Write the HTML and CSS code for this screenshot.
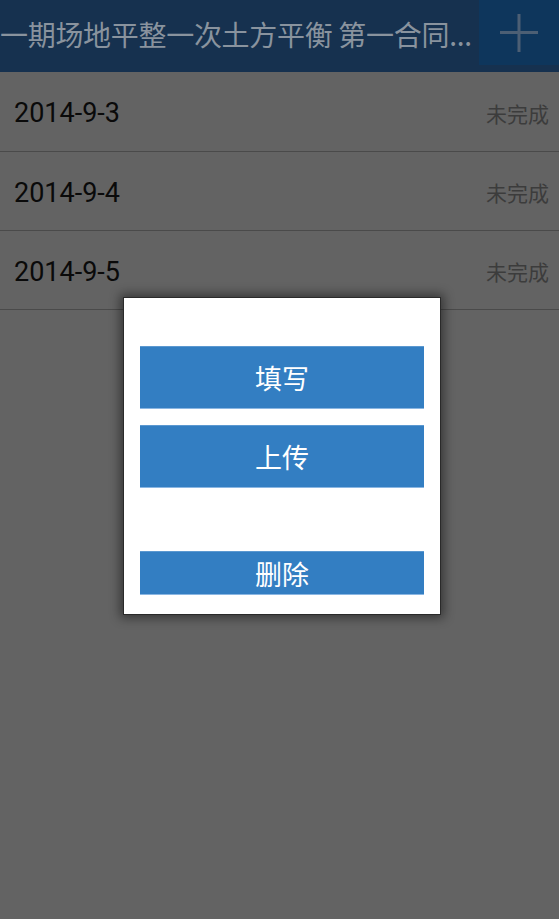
FILE: index.html
```html
<!DOCTYPE html>
<html lang="zh-CN">
<head>
<meta charset="utf-8">
<title>列表</title>
<link rel="stylesheet" href="styles.css">
</head>
<body>
<div class="app">
  <header class="topbar">
    <div class="title">一期场地平整一次土方平衡 第一合同...</div>
    <div class="add-btn">
      <svg width="40" height="38" viewBox="0 0 40 38"><path d="M20 0V38M1 18.5H39" stroke="#4c5f74" stroke-width="3" fill="none"/></svg>
    </div>
  </header>
  <ul class="list">
    <li class="row"><span class="date">2014-9-3</span><span class="status">未完成</span></li>
    <li class="row"><span class="date">2014-9-4</span><span class="status">未完成</span></li>
    <li class="row"><span class="date">2014-9-5</span><span class="status">未完成</span></li>
  </ul>
</div>
<div class="dialog">
  <div class="dbtn big">填写</div>
  <div class="dbtn big">上传</div>
  <div class="spacer"></div>
  <div class="dbtn small">删除</div>
</div>
</body>
</html>
```
FILE: styles.css
```css
html, body {
  margin: 0;
  padding: 0;
  width: 559px;
  height: 919px;
  background: #636363;
  overflow: hidden;
  font-family: Roboto, "Noto Sans CJK SC", sans-serif;
}
.app {
  width: 559px;
}
.topbar {
  height: 72px;
  background: #16314f;
  display: flex;
  align-items: flex-start;
  justify-content: space-between;
}
.title {
  font-family: "Noto Sans CJK SC", sans-serif;
  font-size: 28px;
  color: #89939e;
  line-height: 68px;
  white-space: nowrap;
  overflow: hidden;
  letter-spacing: -0.3px;
}
.add-btn {
  width: 80px;
  height: 65px;
  background: #0e365c;
  display: flex;
  align-items: center;
  justify-content: center;
  flex-shrink: 0;
}
.list {
  list-style: none;
  margin: 0;
  padding: 0;
}
.row {
  height: 78px;
  border-bottom: 1px solid #4a4a4a;
  display: flex;
  align-items: center;
  justify-content: space-between;
  padding: 0 10px 0 14px;
}
.row:first-child {
  height: 79px;
}
.date {
  font-size: 27px;
  color: #0a0a0a;
  padding-top: 3px;
}
.status {
  font-family: "Noto Sans CJK SC", sans-serif;
  font-size: 21px;
  color: #3c3c3c;
  padding-top: 2px;
}
.dialog {
  position: absolute;
  left: 123px;
  top: 297px;
  width: 284px;
  padding: 48px 16px 19px;
  background: #fff;
  border: 1px solid #2a2a2a;
  box-shadow: 0 0 10px 3px rgba(0,0,0,0.45);
  display: flex;
  flex-direction: column;
  gap: 16px;
}
.dbtn {
  background: #337ec2;
  color: #fff;
  font-family: "Noto Sans CJK SC", sans-serif;
  font-size: 27px;
  display: flex;
  align-items: center;
  justify-content: center;
  box-sizing: border-box;
  border-top: 1px solid #5b98d0;
  border-bottom: 1px solid #8ab6e2;
}
.big {
  height: 63px;
}
.small {
  height: 44px;
}
.spacer {
  height: 31px;
}
```
